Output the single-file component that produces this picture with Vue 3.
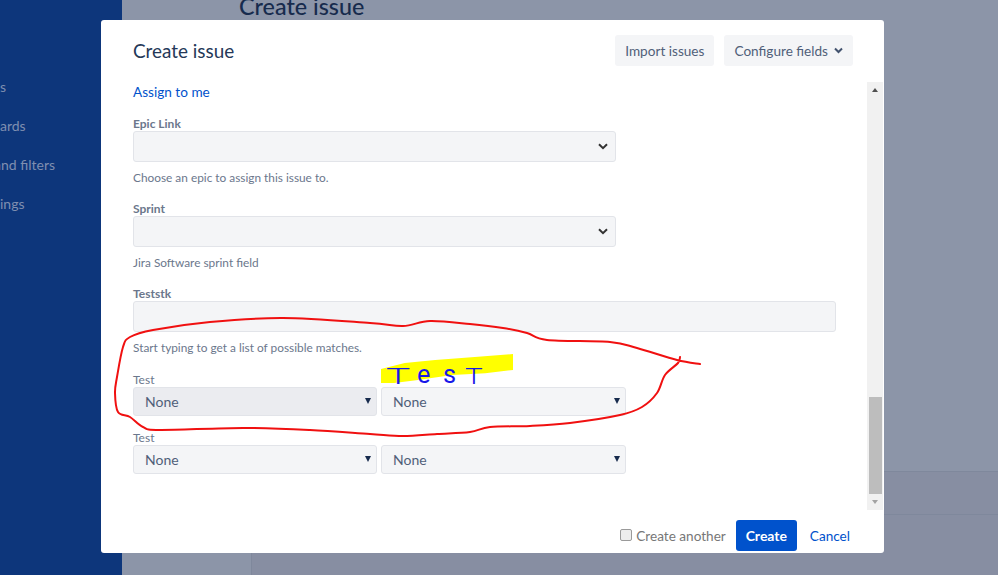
<script setup>
const navItems = [
  { label: 's', shift: 0 },
  { label: 'ards', shift: 0 },
  { label: 'and filters', shift: -6 },
  { label: 'ings', shift: 0 }
]

// Smooth a hand-drawn annotation through sampled points (Catmull-Rom to Bezier)
function smooth(p) {
  let d = `M${p[0][0]} ${p[0][1]}`
  for (let i = 0; i < p.length - 1; i++) {
    const a = p[Math.max(i - 1, 0)], b = p[i], c = p[i + 1], e = p[Math.min(i + 2, p.length - 1)]
    d += ` C${b[0] + (c[0] - a[0]) / 6} ${b[1] + (c[1] - a[1]) / 6} ${c[0] - (e[0] - b[0]) / 6} ${c[1] - (e[1] - b[1]) / 6} ${c[0]} ${c[1]}`
  }
  return d
}
const redPath = smooth([
  [700, 364], [677, 360], [637, 348], [610, 342], [547, 340], [527, 333], [503, 328], [470, 324],
  [430, 321], [403, 326], [370, 323], [283, 318], [210, 322], [153, 330], [130, 337], [123, 347],
  [117, 377], [115, 393], [118, 412], [130, 417], [143, 427], [160, 430], [243, 428], [310, 430],
  [370, 434], [403, 436], [437, 434], [470, 432], [490, 427], [530, 426], [570, 423], [620, 415],
  [642, 407], [657, 393], [665, 375], [678, 363], [680, 357]
])
</script>

<template>
  <div class="page">
    <aside class="sidebar">
      <a v-for="item in navItems" :key="item.label" class="nav-item" :style="{ marginLeft: item.shift + 'px' }">{{ item.label }}</a>
    </aside>
    <main class="backdrop">
      <h1 class="page-title">Create issue</h1>
      <div class="bottom-panel">
        <div class="bottom-cell"></div>
      </div>
    </main>
    <section class="modal">
      <header class="modal-head">
        <h2>Create issue</h2>
        <div class="head-actions">
          <button class="ghost">Import issues</button>
          <button class="ghost">Configure fields
            <svg width="9" height="7" viewBox="0 0 9 7"><path d="M1 1.5l3.5 3.5L8 1.5" fill="none" stroke="#42526e" stroke-width="2"/></svg>
          </button>
        </div>
      </header>
      <div class="modal-body">
        <div class="form">
          <a class="assign">Assign to me</a>
          <label class="lbl bold first">Epic Link</label>
          <div class="field wide-select">
            <svg width="10" height="7" viewBox="0 0 10 7"><path d="M1 1.2l4 4 4-4" fill="none" stroke="#333" stroke-width="2"/></svg>
          </div>
          <p class="hint">Choose an epic to assign this issue to.</p>
          <label class="lbl bold">Sprint</label>
          <div class="field wide-select">
            <svg width="10" height="7" viewBox="0 0 10 7"><path d="M1 1.2l4 4 4-4" fill="none" stroke="#333" stroke-width="2"/></svg>
          </div>
          <p class="hint">Jira Software sprint field</p>
          <label class="lbl bold">Teststk</label>
          <div class="field wide-input"></div>
          <p class="hint">Start typing to get a list of possible matches.</p>
          <label class="lbl test-one">Test</label>
          <div class="pair">
            <div class="field small hover">None<i class="caret"></i></div>
            <div class="field small">None<i class="caret"></i></div>
          </div>
          <label class="lbl test-two">Test</label>
          <div class="pair">
            <div class="field small">None<i class="caret"></i></div>
            <div class="field small">None<i class="caret"></i></div>
          </div>
        </div>
        <div class="scrollbar">
          <i class="arrow up"></i>
          <div class="track"><div class="thumb"></div></div>
          <i class="arrow down"></i>
        </div>
      </div>
      <footer class="modal-foot">
        <label class="another"><span class="check"></span>Create another</label>
        <button class="primary">Create</button>
        <a class="cancel">Cancel</a>
      </footer>
    </section>
    <div class="highlight"></div>
    <div class="scrawl"><span class="t1">T</span><span class="e">e</span><span class="s">s</span><span class="t2">T</span></div>
    <svg class="ink" width="998" height="575" viewBox="0 0 998 575">
      <path :d="redPath" fill="none" stroke="#f01010" stroke-width="2" stroke-linecap="round" stroke-linejoin="round"/>
    </svg>
  </div>
</template>

<style>
html, body { margin: 0; background: #8c95a8; }
</style>

<style scoped>
.page {
  position: relative; width: 998px; height: 575px; overflow: hidden;
  display: flex; background: #8c95a8; color: #172b4d;
  font-family: Lato, "Noto Sans", sans-serif;
}
.sidebar {
  width: 122px; flex: none; background: #0d367b; box-sizing: border-box;
  padding-top: 76px; display: flex; flex-direction: column; gap: 18px; overflow: hidden;
}
.nav-item { font-size: 14px; line-height: 21px; color: #7f8fb0; white-space: nowrap; }
.backdrop { flex: 1; display: flex; flex-direction: column; justify-content: space-between; position: relative; }
.page-title { margin: -10px 0 0 117px; font-size: 23.3px; font-weight: 500; line-height: 32px; color: #172b4d; }
.bottom-panel { height: 104px; background: #878ea2; border-top: 1px solid #7f889c; box-sizing: border-box; display: flex; position: relative; }
.bottom-panel::after { content: ""; position: absolute; left: 130px; right: 0; top: 42px; height: 1px; background: #7f889c; }
.bottom-cell { width: 129px; background: #8c95a8; border-right: 1px solid #7f889c; }
.modal {
  position: absolute; left: 101px; top: 20px; width: 783px; height: 533px;
  background: #fff; border-radius: 3px; display: flex; flex-direction: column; overflow: hidden;
}
.modal-head { height: 62px; flex: none; display: flex; align-items: center; justify-content: space-between; padding: 0 31px 0 32px; box-sizing: border-box; }
.modal-head h2 { margin: -1px 0 0; font-size: 18.9px; font-weight: 400; color: #253858; line-height: 24px; }
.head-actions { display: flex; gap: 10px; margin-top: -1px; }
.ghost {
  height: 31px; padding: 0 10px; border: 0; border-radius: 3px; background: #f4f5f7; color: #505f79;
  font: 13.6px Lato, "Noto Sans", sans-serif; display: flex; align-items: center; gap: 6px;
}
.modal-body { flex: 1; display: flex; min-height: 0; }
.form { flex: 1; padding-left: 32px; display: flex; flex-direction: column; align-items: flex-start; }
.assign { font-size: 13.6px; line-height: 20px; color: #0052cc; }
.lbl { font-size: 12px; line-height: 15px; color: #6b778c; display: block; }
.lbl.bold { font-weight: 700; margin-top: 15px; }
.lbl.first { margin-top: 14px; }
.lbl.test-one { margin-top: 16px; }
.lbl.test-two { margin-top: 14px; }
.field { background: #f4f5f7; border: 1px solid #e2e4e9; border-radius: 3px; box-sizing: border-box; }
.wide-select { width: 483px; height: 31px; display: flex; align-items: center; justify-content: flex-end; padding-right: 7px; }
.wide-input { width: 703px; height: 31px; }
.hint { margin: 8px 0 0; font-size: 11.85px; line-height: 16px; color: #6b778c; }
.pair { display: flex; gap: 4px; }
.small { width: 244px; height: 29px; display: flex; align-items: center; padding-left: 11px; font-size: 14px; color: #505f79; position: relative; }
.hover { background: #ebecf0; }
.small:last-child { width: 245px; }
.caret {
  position: absolute; right: 5px; top: 10px; width: 0; height: 0;
  border-left: 3.5px solid transparent; border-right: 3.5px solid transparent; border-top: 6px solid #172b4d;
}
.scrollbar { width: 16px; margin-right: 1px; flex: none; background: #f1f1f1; display: flex; flex-direction: column; align-items: center; height: 428px; }
.arrow { width: 0; height: 0; border-left: 3.5px solid transparent; border-right: 3.5px solid transparent; flex: none; }
.arrow.up { border-bottom: 4px solid #505050; margin: 6px 0; }
.arrow.down { border-top: 4px solid #a3a3a3; margin: 6px 0; }
.track { flex: 1; width: 100%; display: flex; flex-direction: column; justify-content: flex-end; }
.thumb { height: 97px; width: 13px; margin: 0 auto; background: #bdbdbd; }
.modal-foot { height: 43px; flex: none; display: flex; align-items: center; justify-content: flex-end; padding: 10px 34px 2px 0; box-sizing: border-box; }
.another { font-size: 13.6px; color: #777; display: flex; align-items: center; gap: 4px; margin-right: 10px; }
.check { width: 12px; height: 12px; box-sizing: border-box; border: 1px solid #9a9a9a; border-radius: 2px; background: #ededed; margin-top: -2px; }
.primary { width: 61px; height: 31px; border: 0; border-radius: 3px; background: #0052cc; color: #fff; font: 700 14px Lato, "Noto Sans", sans-serif; }
.cancel { font-size: 13.6px; color: #0052cc; margin-left: 13px; }
.highlight {
  position: absolute; left: 381px; top: 354px; width: 132px; height: 29px; background: #ffff00;
  clip-path: polygon(0 52%, 18% 31%, 41% 21%, 71% 10%, 100% 0, 100% 55%, 79% 66%, 54% 72%, 28% 90%, 10% 100%, 0 100%);
}
.scrawl {
  position: absolute; left: 386px; top: 363px; display: flex; color: #1818e8;
  font: 300 22px/28px Roboto, "Liberation Sans", sans-serif;
}
.scrawl span { display: block; transform-origin: left bottom; }
.t1 { transform: scaleX(1.85); }
.e { margin-left: 18px; transform: scale(1.15); font-weight: 400; }
.s { margin-left: 14px; transform: scale(1.15); font-weight: 400; }
.t2 { margin-left: 11px; transform: scaleX(1.35); }
.ink { position: absolute; left: 0; top: 0; pointer-events: none; }
</style>
